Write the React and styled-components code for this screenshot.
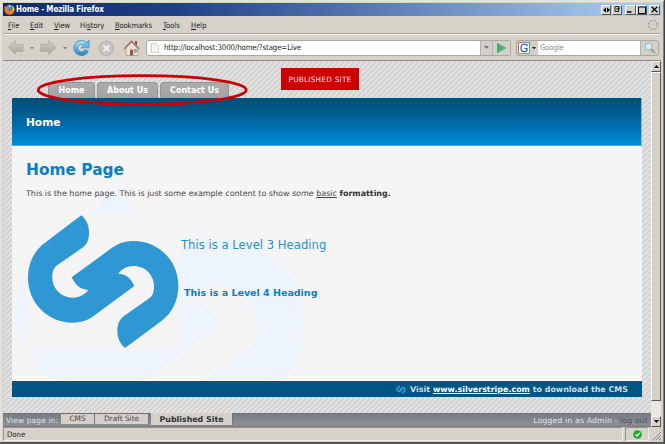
import React from 'react';
import styled, { createGlobalStyle, css } from 'styled-components';

const Global = createGlobalStyle`
  * { box-sizing: border-box; }
  html, body { margin: 0; padding: 0; overflow: hidden; }
  body { font-family: 'DejaVu Sans', Verdana, sans-serif; }
  svg { display: block; flex: none; }
`;

const uiFont = css`
  font-family: 'DejaVu Sans Condensed', 'DejaVu Sans', Tahoma, sans-serif;
  font-stretch: condensed;
`;

const Window = styled.div`
  position: relative;
  width: 665px;
  height: 444px;
  display: flex;
  flex-direction: column;
  background: #d6d2ca;
  padding: 3px 3px 3px 3px;
  border-right: 1px solid #404040;
  border-bottom: 2px solid #555;
  box-shadow: inset 1px 1px 0 #e4e1da, inset -1px 0 0 #808080, inset 2px 2px 0 #e6e3dc;
  white-space: nowrap;
`;

const TitleBar = styled.div`
  height: 13px;
  flex: none;
  display: flex;
  align-items: center;
  padding: 0 1px 0 1px;
  background: linear-gradient(90deg, #0c2a70 0%, #1d3f86 25%, #5f82ba 60%, #a4c8ef 94%, #a6caf0 100%);
`;

const Title = styled.span`
  ${uiFont}
  color: #fff;
  font-size: 8px;
  font-weight: bold;
  line-height: 13px;
  margin-left: 1px;
  letter-spacing: ${(p) => p.$ls || 0}px;
`;

const WinButtons = styled.div`
  display: flex;
  margin-left: auto;
`;

const WinButton = styled.span`
  width: ${(p) => p.$w || 10}px;
  height: 10px;
  margin-left: ${(p) => p.$gap || 0}px;
  background: #d6d2ca;
  border: 1px solid;
  border-color: #fff #555 #555 #fff;
  display: flex;
  align-items: center;
  justify-content: center;
`;

const MenuBar = styled.div`
  ${uiFont}
  height: 18px;
  flex: none;
  display: flex;
  align-items: center;
  padding: 1px 2px 0 5px;
  font-size: 7.6px;
  color: #222;
  border-bottom: 1px solid #aaa69e;
`;

const MenuItem = styled.span`
  width: ${(p) => p.$w}px;
  letter-spacing: ${(p) => p.$ls || 0}px;
  u { text-underline-offset: 1px; text-decoration-thickness: 1px; }
`;

const Throbber = styled.div`
  margin-left: auto;
`;

const Toolbar = styled.div`
  height: 27px;
  flex: none;
  display: flex;
  align-items: center;
  border-top: 1px solid #f2f0ec;
  border-bottom: 1px solid #8d8a86;
  padding: 0 1px 0 5px;
`;

const NavIcons = styled.div`
  width: 138px;
  height: 20px;
  flex: none;
`;

const Field = styled.div`
  display: flex;
  height: 16px;
  width: ${(p) => p.$w}px;
  flex: none;
  margin-left: ${(p) => p.$gap || 0}px;
  background: #fff;
  border: 1px solid #aaa7a3;
  border-radius: 2px;
  overflow: hidden;
`;

const FieldText = styled.span`
  ${uiFont}
  flex: 1;
  font-size: 7.8px;
  line-height: 14px;
  color: ${(p) => p.$color || '#222'};
  padding-left: ${(p) => p.$pad || 0}px;
  letter-spacing: ${(p) => p.$ls || 0}px;
`;

const FieldPart = styled.span`
  width: ${(p) => p.$w}px;
  flex: none;
  display: flex;
  align-items: center;
  justify-content: center;
  background: ${(p) => (p.$plain ? 'transparent' : '#d3cfc8')};
  border-left: ${(p) => (p.$line ? '1px solid #b4b1ac' : 'none')};
`;

const Viewport = styled.div`
  height: 366px;
  flex: none;
  display: flex;
`;

const PageColumn = styled.div`
  width: 648px;
  flex: none;
  display: flex;
  flex-direction: column;
`;

const Page = styled.div`
  position: relative;
  height: 352px;
  padding: 0 9px;
  display: flex;
  flex-direction: column;
  background: repeating-linear-gradient(135deg, #d2d2d2 0, #d0d0d0 0.9px, #e2e2e2 1.7px, #e2e2e2 2.9px, #d2d2d2 3.77px);
`;

const TabRow = styled.div`
  height: 37px;
  flex: none;
  display: flex;
  align-items: flex-end;
  gap: 2px;
  padding-left: 36px;
`;

const Tab = styled.span`
  width: ${(p) => p.$w}px;
  height: 16px;
  border-radius: 4px 4px 0 0;
  border: 1px solid #949494;
  border-bottom: 0;
  background: linear-gradient(#acacac, #a3a3a3);
  color: #fff;
  font-size: 8px;
  font-weight: bold;
  line-height: 15px;
  text-align: center;
`;

const Published = styled.div`
  position: absolute;
  left: 278px;
  top: 7px;
  width: 78px;
  height: 22px;
  background: #cc0000;
  color: #fbe3e3;
  font-size: 7.3px;
  line-height: 23px;
  text-align: center;
  letter-spacing: 0.25px;
`;

const Ring = styled.svg`
  position: absolute;
  left: 32px;
  top: 10px;
`;

const Banner = styled.div`
  height: 48px;
  flex: none;
  padding-left: 14px;
  background: linear-gradient(#00507c 0%, #005583 20%, #0070b0 62%, #0089d2 94%, #008ad4 100%);
  border-bottom: 1px solid #46a6dc;
  border-right: 1px solid #8eb6d0;
  color: #fff;
  font-size: 10.6px;
  font-weight: bold;
  line-height: 49px;
`;

const Content = styled.div`
  position: relative;
  height: 235px;
  flex: none;
  padding: 0 14px;
  overflow: hidden;
  background: #f5f5f5;
  border-bottom: 1px solid #fff;
`;

const Watermark = styled.svg`
  position: absolute;
  left: 0;
  top: 0;
`;

const Body = styled.div`
  position: relative;
  padding-top: 14px;
`;

const PageTitle = styled.h1`
  margin: 0;
  color: #0a7fc6;
  font-size: 15.4px;
  line-height: 20px;
`;

const Paragraph = styled.p`
  margin: 8px 0 0;
  color: #454545;
  font-size: 7.98px;
  line-height: 12px;
  b { color: #333; }
  u { text-underline-offset: 1px; text-decoration-thickness: 1px; }
`;

const Figure = styled.div`
  display: flex;
  margin-top: 13px;
`;

const Logo = styled.div`
  width: 154px;
  height: 137px;
  background: #f4f4f4;
`;

const Headings = styled.div`
  padding-top: 24px;
`;

const H3 = styled.h3`
  margin: 0;
  padding-left: 1px;
  color: #2a8fd0;
  font-size: 11.65px;
  font-weight: normal;
  line-height: 16px;
`;

const H4 = styled.h4`
  margin: 32px 0 0 4px;
  color: #0a7fc6;
  font-size: 9.5px;
  line-height: 16px;
`;

const Footer = styled.div`
  height: 16px;
  flex: none;
  display: flex;
  align-items: center;
  justify-content: flex-end;
  gap: 4px;
  padding-right: 14px;
  background: #005581;
  color: #d2dde4;
  font-size: 7.96px;
  font-weight: bold;
  line-height: 16px;
  span { padding-top: 1px; }
  u { color: #fff; text-underline-offset: 1px; text-decoration-thickness: 1px; }
`;

const StageBar = styled.div`
  height: 14px;
  display: flex;
  align-items: flex-start;
  padding-left: 3px;
  background: linear-gradient(#777b84, #8b8f97 85%, #777);
  border-top: 1px solid #716f70;
  color: #e2e4e8;
  font-size: 7.4px;
`;

const StageLabel = styled.span`
  width: 55px;
  line-height: 13px;
  letter-spacing: 0.17px;
`;

const StageTab = styled.span`
  width: ${(p) => p.$w}px;
  height: ${(p) => (p.$active ? 12 : 10)}px;
  margin-top: ${(p) => (p.$active ? -1 : 0)}px;
  line-height: ${(p) => (p.$active ? 13 : 10)}px;
  margin-left: ${(p) => (p.$active ? 2 : 0)}px;
  font-weight: ${(p) => (p.$active ? 'bold' : 'normal')};
  font-size: ${(p) => (p.$active ? 7.9 : 7.4)}px;
  background: #d4d0c8;
  border-right: 1px solid #77777a;
  color: ${(p) => (p.$active ? '#333' : '#484848')};
  text-align: center;
`;

const Login = styled.span`
  margin-left: auto;
  padding-right: 3px;
  line-height: 14px;
  font-size: 7.7px;
  letter-spacing: 0.16px;
  span { color: #4d525b; }
`;

const Scrollbar = styled.div`
  width: 10px;
  flex: none;
  display: flex;
  flex-direction: column;
  background: #ebe8e3;
`;

const ScrollButton = styled.div`
  height: 11px;
  flex: none;
  display: flex;
  align-items: center;
  justify-content: center;
  background: #d6d2ca;
  border: 1px solid;
  border-color: #f5f3f0 #555 #555 #f5f3f0;
`;

const Thumb = styled.div`
  height: 329px;
  flex: none;
  background: #d4d0c8;
  border: 1px solid;
  border-color: #faf9f7 #5a5a5a #5a5a5a #faf9f7;
`;

const ScrollTrack = styled.div`
  flex: 1;
`;

const StatusBar = styled.div`
  height: 14px;
  flex: none;
  display: flex;
  gap: 2px;
`;

const StatusCell = styled.div`
  ${uiFont}
  width: ${(p) => p.$w}px;
  border: 1px solid;
  border-color: #96938e #f2f0ec #f2f0ec #96938e;
  font-size: 7.7px;
  line-height: 13px;
  color: #222;
  padding-left: ${(p) => p.$pad || 0}px;
  display: flex;
  align-items: center;
`;

const S_PATH =
  'M214 46C231 60 237 80 237 97C237 122 230 135 215 145L142 195C130 205 127 215 127 232C127 267 154 293 188 293C209 293 223 284 235 270C210 268 196 255 185 232L300 148C322 131 343 123 370 123C447 123 505 183 505 257C505 300 487 338 455 362L345 444C328 430 322 411 322 394C322 370 329 358 345 346L418 295C429 287 432 275 432 259C432 224 405 198 371 198C350 198 336 207 325 221C349 222 362 234 373 258L258 343C236 360 216 368 189 368C112 368 54 308 54 234C54 190 72 152 105 128Z';

function NavButtons() {
  return (
    <svg width="138" height="20" viewBox="8 37 138 20">
      <defs>
        <linearGradient id="arrow" x1="0" y1="0" x2="0" y2="1">
          <stop offset="0" stopColor="#cfccc7" />
          <stop offset="1" stopColor="#aaa7a2" />
        </linearGradient>
        <linearGradient id="reload" x1="0" y1="0" x2="0" y2="1">
          <stop offset="0" stopColor="#8fcff2" />
          <stop offset="1" stopColor="#2f8fd0" />
        </linearGradient>
      </defs>
      <g fill="url(#arrow)" stroke="#b0ada7" strokeWidth="0.8" strokeLinejoin="round">
        <path d="M8.300 46.500L15.500 39.500V43.300H23V50.500H15.500V53.500Z" />
        <path d="M56 46.500L48.500 39.500V43.300H40.500V50.500H48.500V53.500Z" />
      </g>
      <path d="M30 46h4l-2 2.200zM63 46h4l-2 2.200z" fill="#85827d" />
      <path d="M85.200 42.700A5.700 5.700 0 1 0 86.800 49" fill="none" stroke="#4a90c2" strokeWidth="4.600" />
      <path d="M81 46.800H89V39Z" fill="#6bb9e6" stroke="#4a90c2" strokeWidth="0.800" />
      <path d="M85.200 42.700A5.700 5.700 0 1 0 86.800 49" fill="none" stroke="url(#reload)" strokeWidth="3.400" />
      <path d="M76.500 45.500A5 5 0 0 1 83 42" fill="none" stroke="#c1e5f8" strokeWidth="1" />
      <circle cx="106.300" cy="47.300" r="7.300" fill="#c6c3be" stroke="#b5b2ad" />
      <path d="M103.300 44.300l6 6m0-6l-6 6" stroke="#f0eeea" strokeWidth="2" />
      <path d="M126 47V54.500H138V47L132 41Z" fill="#eee3d6" stroke="#a98c7a" strokeWidth="0.700" />
      <path d="M136 40V45" stroke="#83584a" strokeWidth="2" />
      <path d="M124.200 48L131.500 40.200L139 48" fill="none" stroke="#ad7767" strokeWidth="1.800" />
      <rect x="130" y="48.500" width="3.200" height="6" fill="#9a5a48" />
      <rect x="134.500" y="48.500" width="2" height="3" fill="#8aa6bb" stroke="#8d786c" strokeWidth="0.400" />
    </svg>
  );
}

function FirefoxIcon() {
  return (
    <svg width="11" height="11" viewBox="0 0 11 11">
      <circle cx="5.500" cy="5.500" r="4.700" fill="#3c78c8" />
      <path d="M4 1.500Q6.500 0.500 7.500 2L5.500 4Z" fill="#8ec5ec" />
      <path d="M0.500 2L2.500 3L4.500 3L5 4.500L3.800 5.800Q5 7.500 7.500 6.300Q9 4.500 8 1.500Q11 3.500 10.500 6.500Q9.300 10.700 5.500 10.700Q1.300 10.500 0.500 6.500Z" fill="#ee7d1a" />
      <path d="M9 2.500Q10.500 5 9 7.500" stroke="#fbcf45" fill="none" />
    </svg>
  );
}

export default function App() {
  return (
    <>
      <Global />
      <Window>
        <TitleBar>
          <FirefoxIcon />
          <Title $ls={-0.14}>Home - Mozilla Firefox</Title>
          <WinButtons>
            <WinButton>
              <svg width="7" height="6"><path d="M0 3L3 .5V5.500ZM7 3L4 .5V5.500Z" fill="#000" /></svg>
            </WinButton>
            <WinButton $gap={1}>
              <svg width="7" height="7"><path d="M1 .5H5V2.500M1 .5V5.500H5M2 3H6M4.500 1.500V5" stroke="#222" fill="none" /></svg>
            </WinButton>
            <WinButton $gap={3} $w={11}>
              <svg width="7" height="7"><path d="M0 6H4.500" stroke="#000" strokeWidth="1.500" /></svg>
            </WinButton>
            <WinButton $w={11}>
              <svg width="8" height="8"><path d="M.5 1H7.500M.5 1V7.500H7.500V1" stroke="#000" fill="none" /></svg>
            </WinButton>
            <WinButton $gap={2} $w={11}>
              <svg width="7" height="7"><path d="M.7 .7L6.300 6.300M6.300 .7L.7 6.300" stroke="#000" strokeWidth="1.300" /></svg>
            </WinButton>
          </WinButtons>
        </TitleBar>
        <MenuBar>
          <MenuItem $w={22}><u>F</u>ile</MenuItem>
          <MenuItem $w={24}><u>E</u>dit</MenuItem>
          <MenuItem $w={26}><u>V</u>iew</MenuItem>
          <MenuItem $w={35}>Hi<u>s</u>tory</MenuItem>
          <MenuItem $w={48} $ls={-0.15}><u>B</u>ookmarks</MenuItem>
          <MenuItem $w={28}><u>T</u>ools</MenuItem>
          <MenuItem $w={20}><u>H</u>elp</MenuItem>
          <Throbber>
            <svg width="12" height="12" viewBox="0 0 12 12">
              <circle cx="6" cy="6" r="4.500" fill="none" stroke="#b2b0ad" strokeWidth="2.200" strokeDasharray="2.300 1.234" />
            </svg>
          </Throbber>
        </MenuBar>
        <Toolbar>
          <NavIcons><NavButtons /></NavIcons>
          <Field $w={365}>
            <FieldPart $w={16} $plain>
              <svg width="8" height="10"><path d="M.5 .5H5L7.500 3V9.500H.5Z" fill="#f4f4f2" stroke="#d2d0cc" /></svg>
            </FieldPart>
            <FieldText $pad={1} $ls={-0.11}>http://localhost:3000/home/?stage=Live</FieldText>
            <FieldPart $w={12} $line>
              <svg width="5" height="3"><path d="M0 0H5L2.500 3Z" fill="#777" /></svg>
            </FieldPart>
            <FieldPart $w={18} $line>
              <svg width="9" height="10"><path d="M.5 .5L8.500 5L.5 9.500Z" fill="#49ad6d" stroke="#5aa476" /></svg>
            </FieldPart>
          </Field>
          <Field $w={143} $gap={5}>
            <FieldPart $w={21}>
              <svg width="19" height="12" viewBox="0 0 19 12">
                <rect x=".5" y=".5" width="11" height="11" fill="#fff" stroke="#6f92da" />
                <path d="M.5 12V.5H6" fill="none" stroke="#d0706a" />
                <path d="M11.500 0V6" fill="none" stroke="#4aa55c" />
                <path d="M9 4.200V2.200M9 3.500Q8 2 6.200 2Q3 2.300 3 6Q3 9.600 6.200 9.700Q8 9.700 9 8.700V6.500H6.500" fill="none" stroke="#2c4fae" strokeWidth="1.200" />
                <path d="M14 5H18L16 7.200Z" fill="#222" />
              </svg>
            </FieldPart>
            <FieldText $color="#8d8d8d" $pad={2} $ls={-0.2}>Google</FieldText>
            <FieldPart $w={18} $line>
              <svg width="12" height="12" viewBox="0 0 12 12">
                <path d="M6.500 6.500L11 11" stroke="#a19e9a" strokeWidth="2" />
                <circle cx="4.500" cy="4.500" r="3.400" fill="#d9edf7" stroke="#94b1c1" />
              </svg>
            </FieldPart>
          </Field>
        </Toolbar>
        <Viewport>
          <PageColumn>
            <Page>
              <TabRow>
                <Tab $w={47}>Home</Tab>
                <Tab $w={61}>About Us</Tab>
                <Tab $w={69}>Contact Us</Tab>
              </TabRow>
              <Banner>Home</Banner>
              <Content>
                <Watermark width="628" height="234" viewBox="12 146 628 234">
                  <path transform="translate(-18.500 160.200) scale(.6386)" d={S_PATH} fill="#edf4fd" />
                </Watermark>
                <Body>
                  <PageTitle>Home Page</PageTitle>
                  <Paragraph>
                    This is the home page. This is just some example content to show <i>some</i> <u>basic</u> <b>formatting.</b>
                  </Paragraph>
                  <Figure>
                    <Logo>
                      <svg width="154" height="137" viewBox="48 39 462 411">
                        <path d={S_PATH} fill="#2f97d3" />
                      </svg>
                    </Logo>
                    <Headings>
                      <H3>This is a Level 3 Heading</H3>
                      <H4>This is a Level 4 Heading</H4>
                    </Headings>
                  </Figure>
                </Body>
              </Content>
              <Footer>
                <svg width="10" height="9" viewBox="48 39 462 411"><path d={S_PATH} fill="#2f97d3" /></svg>
                <span>Visit <u>www.silverstripe.com</u> to download the CMS</span>
              </Footer>
              <Published>PUBLISHED SITE</Published>
              <Ring width="220" height="38">
                <ellipse cx="107.200" cy="19" rx="104" ry="14.300" fill="none" stroke="#cc0000" strokeWidth="2.800" />
              </Ring>
            </Page>
            <StageBar>
              <StageLabel>View page in:</StageLabel>
              <StageTab $w={34}>CMS</StageTab>
              <StageTab $w={54}>Draft Site</StageTab>
              <StageTab $w={82} $active>Published Site</StageTab>
              <Login>Logged in as Admin - <span>log out</span></Login>
            </StageBar>
          </PageColumn>
          <Scrollbar>
            <ScrollButton>
              <svg width="5" height="3"><path d="M0 3H5L2.500 0Z" fill="#000" /></svg>
            </ScrollButton>
            <Thumb />
            <ScrollTrack />
            <ScrollButton>
              <svg width="5" height="3"><path d="M0 0H5L2.500 3Z" fill="#000" /></svg>
            </ScrollButton>
          </Scrollbar>
        </Viewport>
        <StatusBar>
          <StatusCell $w={621} $pad={3}>Done</StatusCell>
          <StatusCell $w={24} $pad={7}>
            <svg width="9" height="9" viewBox="0 0 9 9">
              <circle cx="4.500" cy="4.500" r="4.300" fill="#1caa25" />
              <path d="M2.500 4.500L4 6L6.700 3" stroke="#fff" strokeWidth="1.300" fill="none" />
            </svg>
          </StatusCell>
          <svg width="10" height="14"><path d="M2 13L10 5M5 13L10 8M8 13L10 11" stroke="#8e8b86" /></svg>
        </StatusBar>
      </Window>
    </>
  );
}
